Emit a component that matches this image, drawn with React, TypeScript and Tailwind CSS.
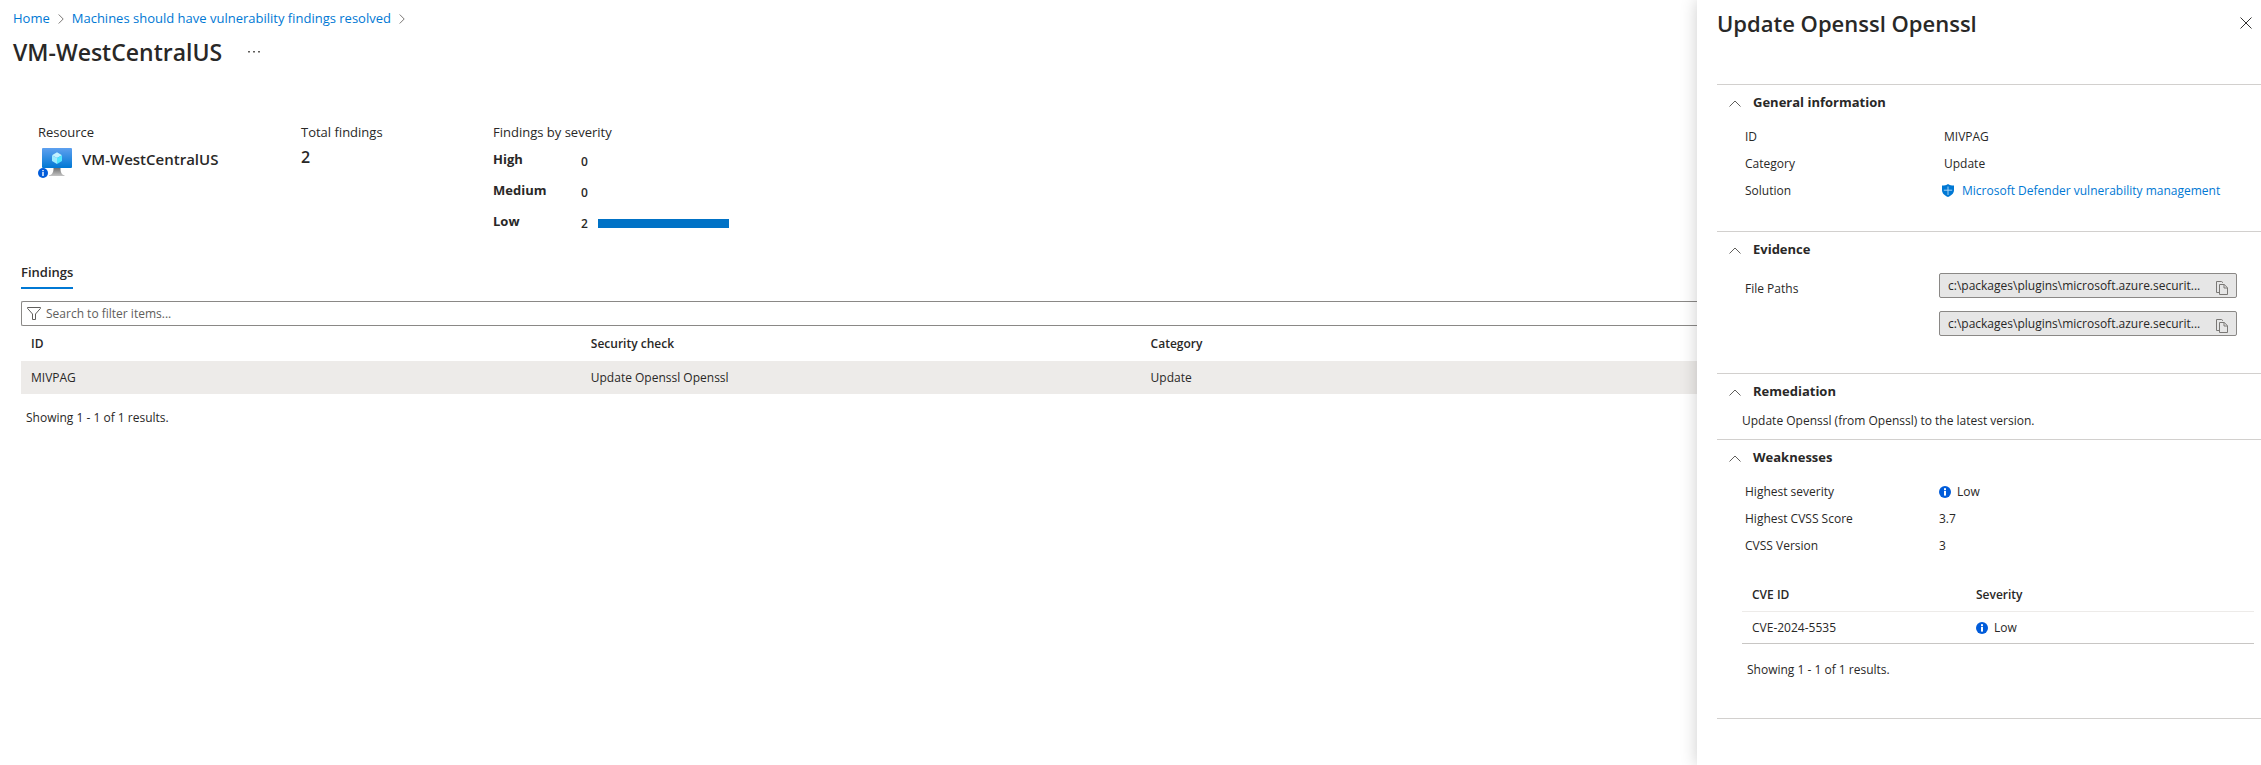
import { useState } from 'react';
import type { ReactNode } from 'react';

const severities = [
  { label: 'High', count: 0 },
  { label: 'Medium', count: 0 },
  { label: 'Low', count: 2 },
];

const findings = [{ id: 'MIVPAG', check: 'Update Openssl Openssl', category: 'Update' }];

const filePaths = [
  'c:\\packages\\plugins\\microsoft.azure.securit...',
  'c:\\packages\\plugins\\microsoft.azure.securit...',
];

const total = severities.reduce((sum, s) => sum + s.count, 0);

function BreadcrumbChevron() {
  return (
    <svg viewBox="0 0 6 10" className="h-[10px] w-[6px]" fill="none" stroke="#7a7876" aria-hidden="true">
      <path d="M0.7 0.5 5.2 5 0.7 9.5" />
    </svg>
  );
}

function InfoIcon({ className }: { className: string }) {
  return (
    <svg viewBox="0 0 12 12" className={className} aria-hidden="true">
      <circle cx="6" cy="6" r="6" fill="#015cda" />
      <rect x="5" y="4.800" width="2" height="4.800" fill="#fff" />
      <rect x="5" y="2.200" width="2" height="1.800" fill="#fff" />
    </svg>
  );
}

function VmIcon() {
  return (
    <svg viewBox="0 0 34 30" className="h-[30px] w-[34px]" aria-hidden="true">
      <defs>
        <linearGradient id="screen" x1="0" y1="0" x2="0" y2="1">
          <stop offset="0" stopColor="#5ea0ef" />
          <stop offset="1" stopColor="#0078d4" />
        </linearGradient>
        <linearGradient id="stand" x1="0" y1="0" x2="0" y2="1">
          <stop offset="0" stopColor="#707070" />
          <stop offset="1" stopColor="#c4c4c4" />
        </linearGradient>
      </defs>
      <rect x="4" y="0" width="30" height="20" rx="1" fill="url(#screen)" />
      <path d="M15.5 20h7c0 4 .8 6.500 4 7.300v.7H11v-.7c3.700-.8 4.500-3.300 4.500-7.300z" fill="url(#stand)" />
      <path d="M19 4.300 24 7.200 19 10.100 14 7.200z" fill="#c3f1ff" />
      <path d="M14 7.200 19 10.100V16L14 13.100z" fill="#9cebff" />
      <path d="M24 7.200 19 10.100V16L24 13.100z" fill="#50e6ff" />
      <circle cx="5" cy="25" r="5" fill="#015cda" />
      <path d="M4.300 24h1.400v4H4.300zM4.300 21.900h1.400v1.300H4.300z" fill="#fff" />
    </svg>
  );
}

function ShieldIcon() {
  return (
    <svg viewBox="0 0 12 13" className="h-[13px] w-3" aria-hidden="true">
      <path d="M6 0C7.500 1.200 9.500 1.500 12 1.500V6c0 3.500-2.700 5.600-6 7-3.300-1.400-6-3.500-6-7V1.500C2.500 1.500 4.500 1.200 6 0z" fill="#0078d4" />
      <path d="M6 2.500V11M1.800 6.200h8.400" stroke="#b5dcf8" strokeWidth="0.9" />
    </svg>
  );
}

function CopyIcon() {
  return (
    <svg viewBox="0 0 12 14" className="h-[14px] w-3" fill="none" stroke="#7a7876" aria-hidden="true">
      <path d="M3 11.500H.5V.5h5.200L7 1.800" />
      <path d="M3.500 3.500h4.700l3.300 3.200v6.800h-8zM8 3.500V7h3.500" />
    </svg>
  );
}

function Section({ title, className, children }: { title: string; className: string; children: ReactNode }) {
  const [open, setOpen] = useState(true);
  return (
    <section className="border-t border-[#d2d0ce]">
      <h3>
        <button
          type="button"
          aria-expanded={open}
          onClick={() => setOpen(!open)}
          className="flex h-[38px] w-full items-center gap-3 pb-0.5 pl-3 text-[13px] font-bold"
        >
          <svg viewBox="0 0 12 7" className="h-[7px] w-3" fill="none" stroke="#605e5c" aria-hidden="true">
            <path d="M0.500 6.500 6 1 11.500 6.500" />
          </svg>
          {title}
        </button>
      </h3>
      {open && <div className={className}>{children}</div>}
    </section>
  );
}

function Row({ label, children }: { label: string; children: ReactNode }) {
  return (
    <div className="flex h-[27px] items-center">
      <dt className="w-[194px]">{label}</dt>
      <dd className="flex items-center">{children}</dd>
    </div>
  );
}

function Low() {
  return (
    <span className="flex items-center gap-1.5">
      <InfoIcon className="h-3 w-3" />
      Low
    </span>
  );
}

export default function App() {
  return (
    <div className="flex min-h-screen overflow-hidden bg-white font-['Open_Sans','Noto_Sans',sans-serif] text-xs text-[#292827]">
      <main className="min-w-0 flex-1">
        <header className="pl-[13px]">
          <nav aria-label="Breadcrumb" className="flex h-9 items-center gap-2 pt-px text-[13px] text-[#0078d4]">
            <a href="#home">Home</a>
            <BreadcrumbChevron />
            <a href="#recommendation">Machines should have vulnerability findings resolved</a>
            <BreadcrumbChevron />
          </nav>
          <div className="flex h-8 items-center gap-6">
            <h1 className="text-[23px] font-semibold">VM-WestCentralUS</h1>
            <button type="button" aria-label="More actions" className="flex h-4 w-4 items-center justify-center">
              <svg viewBox="0 0 12 2" className="h-[2px] w-3" fill="#605e5c" aria-hidden="true">
                <path d="M0 0h2v1.500H0zM5 0h2v1.500H5zM10 0h2v1.500h-2z" />
              </svg>
            </button>
          </div>
        </header>

        <div className="flex pt-[54px] pl-[38px] text-[13px]">
          <div className="w-[263px]">
            <p className="leading-5">Resource</p>
            <div className="flex gap-2.5 pt-1.5">
              <VmIcon />
              <p className="text-[15px] leading-[22px] font-semibold">VM-WestCentralUS</p>
            </div>
          </div>
          <div className="w-[192px]">
            <p className="leading-5">Total findings</p>
            <p className="pt-1 text-base leading-[22px] font-semibold">{total}</p>
          </div>
          <div>
            <p className="leading-5">Findings by severity</p>
            <dl className="pt-1">
              {severities.map((s) => (
                <div key={s.label} className="flex h-[31px] items-center">
                  <dt className="w-[88px] pb-[3px] font-bold">{s.label}</dt>
                  <dd className="flex items-center gap-2.5 text-xs font-semibold">
                    {s.count}
                    {s.count > 0 && (
                      <span className="block w-[131px]">
                        <span className="block h-[9px] bg-[#0072c6]" style={{ width: `${(s.count / total) * 100}%` }} />
                      </span>
                    )}
                  </dd>
                </div>
              ))}
            </dl>
          </div>
        </div>

        <div className="pt-5 pl-[21px]">
          <div role="tablist" className="flex">
            <button
              type="button"
              role="tab"
              aria-selected="true"
              className="h-[30px] border-b-2 border-[#0078d4] pb-px text-[13px] font-semibold"
            >
              Findings
            </button>
          </div>
          <label className="mt-3 flex h-[25px] items-center gap-[5px] rounded-l-xs border border-r-0 border-[#8a8886] pl-[5px]">
            <svg viewBox="0 0 14 13" className="h-[13px] w-[14px]" fill="none" stroke="#605e5c" aria-hidden="true">
              <path d="M.5.5h13v.8L8.500 7v5.500h-3V7L.5 1.300z" />
            </svg>
            <input
              type="text"
              aria-label="Search to filter items"
              placeholder="Search to filter items..."
              className="min-w-0 flex-1 placeholder:text-[#605e5c] focus:outline-none"
            />
          </label>

          <table className="w-full table-fixed text-left">
            <thead>
              <tr className="h-[35px]">
                <th className="w-[33.4%] pl-2.5 font-semibold">ID</th>
                <th className="w-[33.4%] pl-2.5 font-semibold">Security check</th>
                <th className="pl-2.5 font-semibold">Category</th>
              </tr>
            </thead>
            <tbody>
              {findings.map((f) => (
                <tr key={f.id} className="h-[33px] bg-[#edebe9]">
                  <td className="pl-2.5">{f.id}</td>
                  <td className="pl-2.5">{f.check}</td>
                  <td className="pl-2.5">{f.category}</td>
                </tr>
              ))}
            </tbody>
          </table>
          <p className="pt-4 pl-[5px] leading-4">Showing 1 - 1 of 1 results.</p>
        </div>
      </main>

      <aside className="relative w-[564px] shrink-0 bg-white pl-5 shadow-[0_0_16px_rgba(0,0,0,0.2)]">
        <header className="flex h-[84px] items-start justify-between pt-[7px] pr-[9px]">
          <h2 className="text-[22px] leading-8 font-semibold">Update Openssl Openssl</h2>
          <button type="button" aria-label="Close" className="flex h-8 items-center">
            <svg viewBox="0 0 12 12" className="h-3 w-3" stroke="#323130" aria-hidden="true">
              <path d="M.5.5l11 11M11.500.5l-11 11" />
            </svg>
          </button>
        </header>

        <Section title="General information" className="pb-[27px] pl-7">
          <dl>
            <Row label="ID">
              <span className="pl-[5px]">MIVPAG</span>
            </Row>
            <Row label="Category">
              <span className="pl-[5px]">Update</span>
            </Row>
            <Row label="Solution">
              <a href="#defender" className="flex items-center gap-2 pl-[3px] text-[#0078d4]">
                <ShieldIcon />
                Microsoft Defender vulnerability management
              </a>
            </Row>
          </dl>
        </Section>

        <Section title="Evidence" className="flex pt-[3px] pb-[37px] pl-7">
          <p className="w-[194px] pt-2 leading-4">File Paths</p>
          <div className="flex flex-col gap-[13px]">
            {filePaths.map((path, index) => (
              <div key={index} className="flex h-[25px] w-[298px] items-center rounded-xs border border-[#8a8886] bg-[#e6e6e6] pr-2 pl-2">
                <input type="text" readOnly aria-label={`File path ${index + 1}`} value={path} className="min-w-0 flex-1 focus:outline-none" />
                <button type="button" aria-label="Copy to clipboard" className="pt-1">
                  <CopyIcon />
                </button>
              </div>
            ))}
          </div>
        </Section>

        <Section title="Remediation" className="pb-[9px] pl-[25px]">
          <p className="leading-[18px]">Update Openssl (from Openssl) to the latest version.</p>
        </Section>

        <Section title="Weaknesses" className="pb-10 pl-[25px]">
          <dl className="pl-[3px]">
            <Row label="Highest severity">
              <Low />
            </Row>
            <Row label="Highest CVSS Score">3.7</Row>
            <Row label="CVSS Version">3</Row>
          </dl>
          <div className="pt-5 pr-[7px]">
            <table className="w-full table-fixed text-left">
              <thead>
                <tr className="h-8 border-b border-[#edebe9]">
                  <th className="w-[224px] pl-2.5 font-semibold">CVE ID</th>
                  <th className="pl-2.5 font-semibold">Severity</th>
                </tr>
              </thead>
              <tbody>
                <tr className="h-8 border-b border-[#c8c6c4]">
                  <td className="pt-0.5 pl-2.5">CVE-2024-5535</td>
                  <td className="pt-0.5 pl-2.5">
                    <Low />
                  </td>
                </tr>
              </tbody>
            </table>
          </div>
          <p className="pt-[18px] pl-[5px] leading-4">Showing 1 - 1 of 1 results.</p>
        </Section>
        <hr className="border-[#d2d0ce]" />
      </aside>
    </div>
  );
}
